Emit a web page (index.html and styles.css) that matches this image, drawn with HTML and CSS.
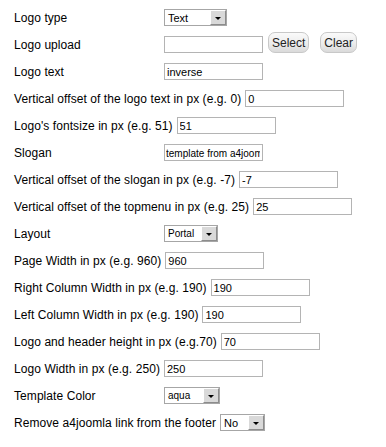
FILE: index.html
```html
<!DOCTYPE html>
<html lang="en">
<head>
    <meta charset="UTF-8">
    <title>Template Parameters</title>
    <link rel="stylesheet" href="styles.css">
</head>
<body>
    <div class="params">
        <div class="row">
            <span class="key">Logo type</span>
            <div class="sel w63"><span class="val">Text</span><span class="drop"><i></i></span></div>
        </div>
        <div class="row">
            <span class="key">Logo upload</span>
            <input class="txt" type="text" value="">
            <button class="btn first">Select</button>
            <button class="btn">Clear</button>
        </div>
        <div class="row">
            <span class="key">Logo text</span>
            <input class="txt" type="text" value="inverse">
        </div>
        <div class="row">
            <span class="key">Vertical offset of the logo text in px (e.g. 0)</span>
            <input class="txt" type="text" value="0">
        </div>
        <div class="row">
            <span class="key">Logo's fontsize in px (e.g. 51)</span>
            <input class="txt" type="text" value="51">
        </div>
        <div class="row">
            <span class="key">Slogan</span>
            <input class="txt small" type="text" value="template from a4joomla">
        </div>
        <div class="row">
            <span class="key">Vertical offset of the slogan in px (e.g. -7)</span>
            <input class="txt" type="text" value="-7">
        </div>
        <div class="row">
            <span class="key">Vertical offset of the topmenu in px (e.g. 25)</span>
            <input class="txt" type="text" value="25">
        </div>
        <div class="row">
            <span class="key">Layout</span>
            <div class="sel w54 small"><span class="val">Portal</span><span class="drop"><i></i></span></div>
        </div>
        <div class="row">
            <span class="key">Page Width in px (e.g. 960)</span>
            <input class="txt" type="text" value="960">
        </div>
        <div class="row">
            <span class="key">Right Column Width in px (e.g. 190)</span>
            <input class="txt" type="text" value="190">
        </div>
        <div class="row">
            <span class="key">Left Column Width in px (e.g. 190)</span>
            <input class="txt" type="text" value="190">
        </div>
        <div class="row">
            <span class="key">Logo and header height in px (e.g.70)</span>
            <input class="txt" type="text" value="70">
        </div>
        <div class="row">
            <span class="key">Logo Width in px (e.g. 250)</span>
            <input class="txt" type="text" value="250">
        </div>
        <div class="row">
            <span class="key">Template Color</span>
            <div class="sel w56 small"><span class="val">aqua</span><span class="drop"><i></i></span></div>
        </div>
        <div class="row">
            <span class="key">Remove a4joomla link from the footer</span>
            <div class="sel w45"><span class="val">No</span><span class="drop"><i></i></span></div>
        </div>
    </div>
</body>
</html>
```

FILE: styles.css
```css
body {
    margin: 0;
    padding: 0;
    background: #fff;
    font-family: "Liberation Sans", Arial, sans-serif;
    font-size: 12px;
    color: #000;
}
.params {
    padding: 9px 0 0 14px;
}
.row {
    display: flex;
    align-items: center;
    height: 17px;
    margin-bottom: 10px;
}
.key {
    min-width: 150px;
    padding-right: 4px;
    box-sizing: border-box;
    white-space: nowrap;
    font-size: 12px;
    letter-spacing: 0.07px;
}
.txt {
    width: 99px;
    height: 17px;
    box-sizing: border-box;
    border: 1px solid #b4b4b4;
    padding: 1px 2px 0;
    margin: 0;
    font-family: "Liberation Sans", Arial, sans-serif;
    font-size: 11px;
    color: #000;
    outline: none;
}
.txt.small {
    font-size: 10px;
    padding-left: 1px;
}
.btn {
    height: 21px;
    margin: 0 0 0 11px;
    padding: 0 3px;
    border: 1px solid #c8c8c8;
    border-radius: 7px;
    background: linear-gradient(#fafafa, #ececec 55%, #dadada);
    font-family: "Liberation Sans", Arial, sans-serif;
    font-size: 12px;
    color: #222;
    position: relative;
    top: -2px;
}
.btn.first {
    margin-left: 5px;
}
.sel {
    display: flex;
    align-items: center;
    height: 17px;
    box-sizing: border-box;
    border: 1px solid #a6a6a6;
    background: #fff;
    font-size: 11px;
}
.sel.small {
    font-size: 10px;
}
.sel .val {
    flex: 1;
    padding-left: 3px;
}
.sel .drop {
    width: 16px;
    height: 15px;
    box-sizing: border-box;
    border: 1px solid #fff;
    border-right-color: #8c8c8c;
    border-bottom-color: #8c8c8c;
    background: #d9d9d9;
    display: flex;
    align-items: center;
    justify-content: center;
}
.sel .drop i {
    width: 0;
    height: 0;
    border-left: 3px solid transparent;
    border-right: 3px solid transparent;
    border-top: 3px solid #000;
    margin-top: 2px;
}
.w63 { width: 63px; }
.w54 { width: 54px; }
.w56 { width: 56px; }
.w45 { width: 45px; }
```
